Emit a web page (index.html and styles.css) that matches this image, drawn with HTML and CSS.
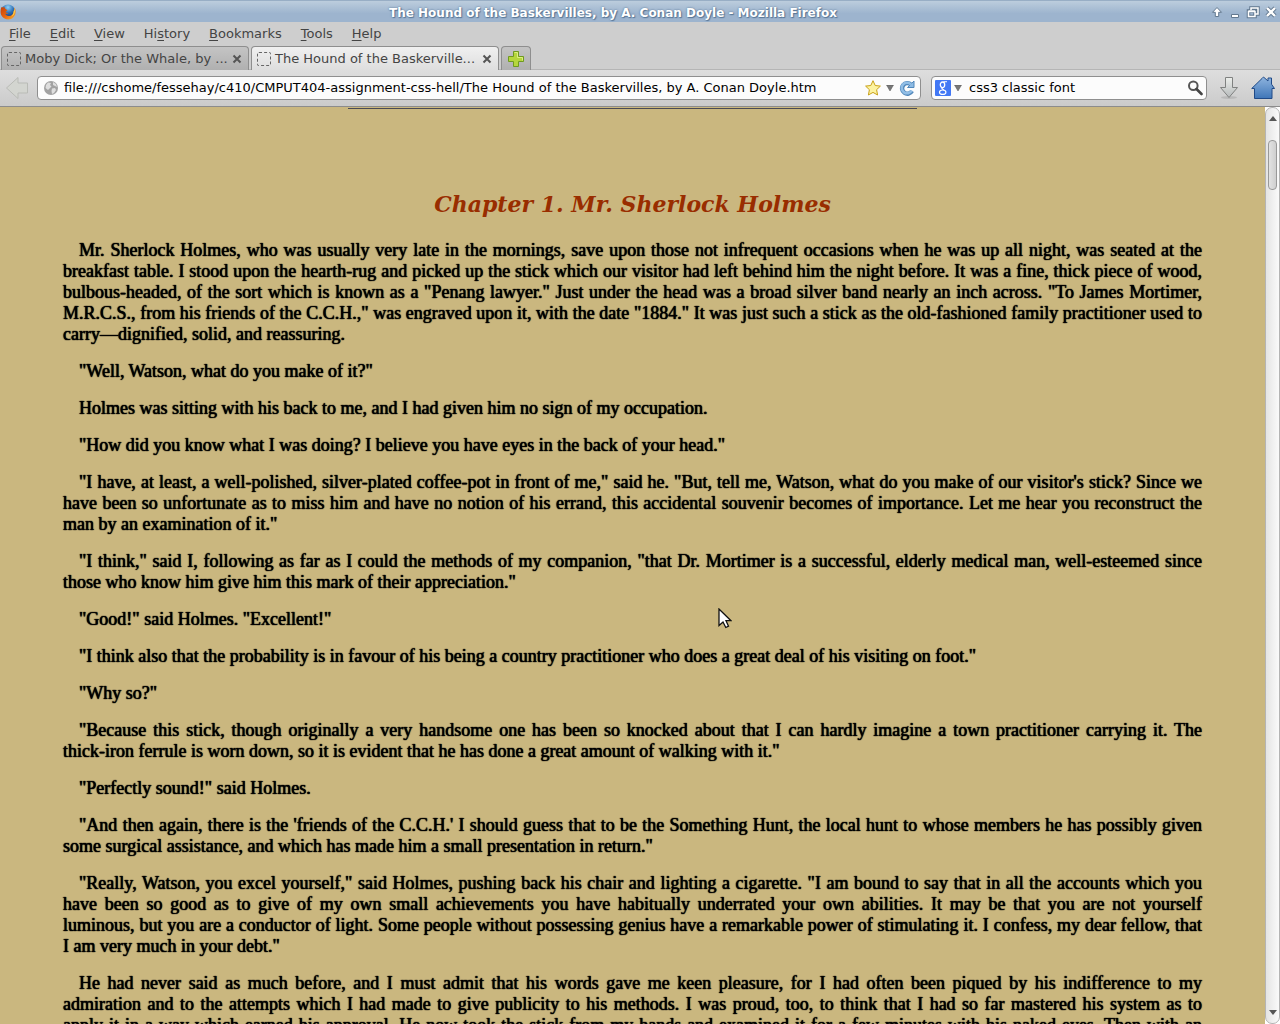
FILE: index.html
```html
<!DOCTYPE html>
<html lang="en">
<head>
<meta charset="utf-8">
<title>The Hound of the Baskervilles, by A. Conan Doyle</title>
<link rel="stylesheet" href="styles.css">
</head>
<body>
<header class="titlebar">
  <svg class="app-icon" viewBox="0 0 16 16" width="16" height="16" aria-hidden="true">
    <defs>
      <radialGradient id="globe" cx=".5" cy=".2" r=".8"><stop offset="0" stop-color="#8fd0f5"/><stop offset=".5" stop-color="#2f6fb4"/><stop offset="1" stop-color="#12306c"/></radialGradient>
      <linearGradient id="fox" x1="0" y1="0" x2="1" y2="1"><stop offset="0" stop-color="#c2410c"/><stop offset=".5" stop-color="#e8610c"/><stop offset="1" stop-color="#f7b733"/></linearGradient>
    </defs>
    <circle cx="8" cy="7.500" r="7" fill="url(#globe)"/>
    <path d="M1.500 3C.300 5.500.100 9.500 1.800 12c2.500 4 8.500 4.800 11.700 1.300C16 10.500 16.300 6.500 14.300 3.200c.300 2-.100 3.300-.700 4.300-.200 3-2.600 4.800-5 4.500-1.700-.200-3-1.200-3.400-2.500 1.200.500 2.300.300 3.100-.600-1.500.100-2.300-.500-2.500-1.500l1.700-1.200C5.800 5.500 4.800 4.500 4.600 3.300 3.500 3.400 2.500 3.700 1.500 3z" fill="url(#fox)"/>
    <path d="M14.300 3.200c.300 2-.100 3.300-.700 4.300 0 2.500-1 4-3 5 4.500-.700 5-5.500 3.700-9.300z" fill="#ffd84a"/>
  </svg>
  <h1 class="window-title">The Hound of the Baskervilles, by A. Conan Doyle - Mozilla Firefox</h1>
  <div class="window-buttons">
    <button aria-label="Shade"><svg viewBox="0 0 14 14" width="14" height="14"><path d="M7 2.500l4.500 4.800H8.700V11.500H5.300V7.300H2.500z" fill="#fff" stroke="#62788f"/></svg></button>
    <button aria-label="Minimize"><svg viewBox="0 0 14 14" width="14" height="14"><path d="M3.500 9.500h7v3h-7z" fill="#fff" stroke="#62788f"/></svg></button>
    <button aria-label="Restore"><svg viewBox="0 0 14 14" width="14" height="14"><path d="M5 5V3h7v6H9.500M2.500 6h6.500v5.500H2.500z" fill="none" stroke="#62788f" stroke-width="3.500"/><path d="M5 5V3h7v6H9.500M2.500 6.500h6.500v5H2.500zM2.500 6h6.500" fill="none" stroke="#fff" stroke-width="1.500"/></svg></button>
    <button aria-label="Close"><svg viewBox="0 0 14 14" width="14" height="14"><path d="M3 3l8 8M11 3l-8 8" stroke="#62788f" stroke-width="4.200"/><path d="M3 3l8 8M11 3l-8 8" stroke="#fff" stroke-width="2.400"/></svg></button>
  </div>
</header>
<nav class="menubar">
  <button><u>F</u>ile</button><button><u>E</u>dit</button><button><u>V</u>iew</button><button>Hi<u>s</u>tory</button><button><u>B</u>ookmarks</button><button><u>T</u>ools</button><button><u>H</u>elp</button>
</nav>
<div class="tabs">
  <div class="tab">
    <span class="page-icon"></span><a class="tab-label" href="#moby">Moby Dick; Or the Whale, by ...</a>
    <button class="tab-close" aria-label="Close tab"><svg viewBox="0 0 10 10" width="10" height="10"><path d="M1.500 1.500l7 7M8.500 1.500l-7 7" stroke="#555" stroke-width="2"/></svg></button>
  </div>
  <div class="tab tab-active">
    <span class="page-icon"></span><a class="tab-label" href="#hound">The Hound of the Baskerville...</a>
    <button class="tab-close" aria-label="Close tab"><svg viewBox="0 0 10 10" width="10" height="10"><path d="M1.500 1.500l7 7M8.500 1.500l-7 7" stroke="#555" stroke-width="2"/></svg></button>
  </div>
  <button class="tab new-tab" aria-label="New tab"><svg viewBox="0 0 16 16" width="16" height="16"><path d="M5.500.500h5v5h5v5h-5v5h-5v-5h-5v-5h5z" fill="#b5d63c" stroke="#6f9a1f"/><path d="M6.500 1.500h3v5h5v3" fill="none" stroke="#dcee82"/></svg></button>
</div>
<div class="toolbar">
  <button class="back" aria-label="Back"><svg viewBox="0 0 24 24" width="24" height="24"><path d="M1.500 12L13 1.500V7h9.500v10H13v5.500z" fill="#d3d5d0" stroke="#b9bbb6"/></svg></button>
  <div class="field location">
    <svg viewBox="0 0 16 16" width="16" height="16" aria-hidden="true"><circle cx="8" cy="8" r="7" fill="#a2a2a2"/><path d="M3 5l2-2.500 3 .500-1 2 1.500 1.500L6 9l-1 1-2.500-2zM10 2l3 2 1 3-2-1-2-1zM9 8.500l3-.500 1 2-2 3-2 1-.500-3z" fill="#dedede"/></svg>
    <input aria-label="Location" value="file:///cshome/fessehay/c410/CMPUT404-assignment-css-hell/The Hound of the Baskervilles, by A. Conan Doyle.htm">
    <button aria-label="Bookmark"><svg viewBox="0 0 16 16" width="16" height="16"><path d="M8 .700l2.200 4.800 5.200.600-3.800 3.600 1 5.300L8 12.400 3.400 15l1-5.300L.600 6.100l5.200-.600z" fill="#fdf3a0" stroke="#c9a21a" stroke-linejoin="round"/></svg></button>
    <button class="drop" aria-label="History"><svg viewBox="0 0 8 6" width="8" height="6"><path d="M.500 0h7L4 6z" fill="#777" stroke="#555" stroke-width=".500"/></svg></button>
    <button aria-label="Reload"><svg viewBox="0 0 16 16" width="16" height="16"><path d="M12 4.500A5.300 5.300 0 1 0 13 11" fill="none" stroke="#5288bb" stroke-width="4.400"/><path d="M8.500 7.500h6.500V1z" fill="#8dbbe4" stroke="#5288bb"/><path d="M12 4.500A5.300 5.300 0 1 0 12.700 10.500" fill="none" stroke="#91bee6" stroke-width="2.600"/></svg></button>
  </div>
  <div class="field search">
    <button aria-label="Search engine" class="engine"><svg viewBox="0 0 16 16" width="16" height="16"><rect width="16" height="16" rx="1" fill="#4278f5"/><ellipse cx="7.500" cy="4.800" rx="2.200" ry="2.800" fill="none" stroke="#fff" stroke-width="1.300"/><ellipse cx="7.700" cy="12.200" rx="3.200" ry="2.200" fill="none" stroke="#fff" stroke-width="1.200"/><path d="M8.500 1.800h3.500M7.500 7.500c-1.500 1 0 1.600 1.500 2.500" fill="none" stroke="#fff" stroke-width="1.100"/></svg>
    <svg viewBox="0 0 8 6" width="8" height="6"><path d="M.500 0h7L4 6z" fill="#777" stroke="#555" stroke-width=".500"/></svg></button>
    <input aria-label="Search" value="css3 classic font">
    <button aria-label="Search"><svg viewBox="0 0 16 16" width="16" height="16"><circle cx="6.300" cy="5.800" r="4.300" fill="none" stroke="#555" stroke-width="2"/><path d="M9.500 9l5 5" stroke="#444" stroke-width="2.600" stroke-linecap="round"/></svg></button>
  </div>
  <button class="tool" aria-label="Downloads"><svg viewBox="0 0 24 24" width="24" height="24"><defs><linearGradient id="dl" x2="0" y2="1"><stop offset="0" stop-color="#eceeeb"/><stop offset="1" stop-color="#b6babb"/></linearGradient></defs><ellipse cx="12" cy="21.500" rx="8" ry="1.500" fill="#aaa" opacity=".6"/><path d="M8.500 1.500h7v10h5L12 21.500 3.500 11.500h5z" fill="url(#dl)" stroke="#7f8180"/></svg></button>
  <button class="tool" aria-label="Home"><svg viewBox="0 0 24 24" width="24" height="24"><defs><linearGradient id="hm" x2="0" y2="1"><stop offset="0" stop-color="#8fb4de"/><stop offset="1" stop-color="#3f76b8"/></linearGradient></defs><path d="M.700 12.500L11 2.500l1.500-1.500L17 5V2h3.500v6.200l3 4.300h-2.500v10H3.500v-10z" fill="url(#hm)" stroke="#204a87" stroke-linejoin="round"/></svg></button>
</div>
<div class="viewport">
  <main class="page">
    <hr>
    <h2>Chapter 1. Mr. Sherlock Holmes</h2>
    <p>Mr. Sherlock Holmes, who was usually very late in the mornings, save upon those not infrequent occasions when he was up all night, was seated at the breakfast table. I stood upon the hearth-rug and picked up the stick which our visitor had left behind him the night before. It was a fine, thick piece of wood, bulbous-headed, of the sort which is known as a "Penang lawyer." Just under the head was a broad silver band nearly an inch across. "To James Mortimer, M.R.C.S., from his friends of the C.C.H.," was engraved upon it, with the date "1884." It was just such a stick as the old-fashioned family practitioner used to carry—dignified, solid, and reassuring.</p>
    <p>"Well, Watson, what do you make of it?"</p>
    <p>Holmes was sitting with his back to me, and I had given him no sign of my occupation.</p>
    <p>"How did you know what I was doing? I believe you have eyes in the back of your head."</p>
    <p>"I have, at least, a well-polished, silver-plated coffee-pot in front of me," said he. "But, tell me, Watson, what do you make of our visitor's stick? Since we have been so unfortunate as to miss him and have no notion of his errand, this accidental souvenir becomes of importance. Let me hear you reconstruct the man by an examination of it."</p>
    <p>"I think," said I, following as far as I could the methods of my companion, "that Dr. Mortimer is a successful, elderly medical man, well-esteemed since those who know him give him this mark of their appreciation."</p>
    <p>"Good!" said Holmes. "Excellent!"</p>
    <p>"I think also that the probability is in favour of his being a country practitioner who does a great deal of his visiting on foot."</p>
    <p>"Why so?"</p>
    <p>"Because this stick, though originally a very handsome one has been so knocked about that I can hardly imagine a town practitioner carrying it. The <span class="unbroken">thick-iron</span> ferrule is worn down, so it is evident that he has done a great amount of walking with it."</p>
    <p>"Perfectly sound!" said Holmes.</p>
    <p>"And then again, there is the 'friends of the C.C.H.' I should guess that to be the Something Hunt, the local hunt to whose members he has possibly given some surgical assistance, and which has made him a small presentation in return."</p>
    <p>"Really, Watson, you excel yourself," said Holmes, pushing back his chair and lighting a cigarette. "I am bound to say that in all the accounts which you have been so good as to give of my own small achievements you have habitually underrated your own abilities. It may be that you are not yourself <span class="unbroken">luminous, but</span> you are a conductor of light. Some people without possessing genius have a remarkable power of stimulating it. I confess, my dear fellow, that <span class="unbroken">I am very</span> much in your debt."</p>
    <p class="continued">He had never said as much before, and I must admit that his words gave me keen pleasure, for I had often been piqued by his indifference to my <span class="unbroken">admiration and</span> to the attempts which I had made to give publicity to his methods. I was proud, too, to think that I had so far mastered his system as to <span class="unbroken">apply it in a way</span> which earned his approval. He now took the stick from my hands and examined it for a few minutes with his naked eyes. Then with an</p>
  </main>
  <div class="scrollbar">
    <div class="track">
      <svg viewBox="0 0 8 5" width="8" height="5"><path d="M4 0l4 5H0z" fill="#555"/></svg>
      <div class="thumb"></div>
      <svg class="down" viewBox="0 0 8 5" width="8" height="5"><path d="M0 0h8L4 5z" fill="#555"/></svg>
    </div>
  </div>
  <svg class="cursor" viewBox="0 0 14 22" width="14" height="22" aria-hidden="true"><path d="M1 1v16.500l4-3.500 2.800 5.500 2.700-1.300L8 12.700h5z" fill="#fff" stroke="#111" stroke-width="1.300"/></svg>
</div>
</body>
</html>
```
FILE: styles.css
```css
* { box-sizing: border-box; }
body {
  margin: 0;
  height: 100vh;
  display: flex;
  flex-direction: column;
  overflow: hidden;
  background: #cecece;
  color: #444;
  font: 13px/20px "DejaVu Sans", sans-serif;
}
button { margin: 0; padding: 0; border: 0; background: none; color: inherit; font: inherit; }
svg { display: block; flex: none; }

.titlebar {
  display: flex;
  align-items: center;
  height: 22px;
  flex: none;
  border-top: 1px solid #98aec5;
  background: linear-gradient(#bccddd, #9db4ce 60%, #9db4ce);
}
.window-title {
  flex: 1;
  margin: 0;
  padding-top: 2px;
  color: #fff;
  font-size: 12px;
  line-height: 20px;
  text-align: center;
  text-shadow: 0 0 2px #4a6a8c, 1px 1px 1px #5c7a9a;
}
.window-buttons { display: flex; gap: 4px; padding-right: 2px; }

.menubar { display: flex; gap: 19px; flex: none; height: 24px; padding: 1px 9px; }
.menubar button { line-height: 20px; }
.menubar u { text-underline-offset: 2px; }

.tabs { display: flex; gap: 2px; flex: none; height: 24px; padding-left: 1px; border-bottom: 1px solid #b5b5b5; }
.tab {
  display: flex;
  align-items: center;
  gap: 4px;
  width: 248px;
  height: 24px;
  padding: 0 6px 0 5px;
  border: 1px solid #8e8e8e;
  border-bottom: 0;
  border-radius: 4px 4px 0 0;
  background: linear-gradient(#c4c4c4, #b0b0b0);
}
.tab-active { background: linear-gradient(#f0f0f0, #dedede); }
.tab-label { flex: 1; color: inherit; text-decoration: none; white-space: nowrap; }
.page-icon { width: 14px; height: 14px; border: 1px dashed #666; border-radius: 2px; }
.new-tab { width: 30px; padding: 0 6px; }

.toolbar {
  display: flex;
  align-items: center;
  gap: 10px;
  flex: none;
  height: 37px;
  padding: 0 5px;
  border-bottom: 1px solid #8c8c8c;
  background: linear-gradient(#dedede, #cbcbcb);
}
.back { margin-right: -2px; }
.field {
  display: flex;
  align-items: center;
  gap: 5px;
  height: 24px;
  padding: 0 5px;
  border: 1px solid #8f8f8f;
  border-radius: 4px;
  background: #fcfcfc;
}
.field input {
  flex: 1;
  min-width: 0;
  padding: 0;
  border: 0;
  background: none;
  color: #000;
  font: inherit;
  outline: 0;
}
.location { flex: 1; }
.search { width: 276px; gap: 7px; padding: 0 3px; }
.engine { display: flex; align-items: center; gap: 3px; }

.viewport { position: relative; display: flex; flex: 1; min-height: 0; background: #cab77f; }
.page {
  flex: 1;
  overflow: hidden;
  padding: 1px 63px 0;
  color: #000;
  font: 18px/21px "Liberation Serif", serif;
  text-shadow: 0 0 1px, 0 0 1px;
}
.page hr { width: 50%; height: 1px; margin: 0 auto 80px; border: 0; background: #4a4a55; }
.page h2 {
  margin: 0 0 21px;
  color: #992d00;
  font: italic bold 22px/30px "DejaVu Serif", serif;
  text-align: center;
  text-shadow: none;
}
.page p { margin: 0 0 16px; text-align: justify; text-indent: 16px; }
.page .continued { text-align-last: justify; }
.unbroken { white-space: nowrap; }

.scrollbar { width: 15px; background: #fff; }
.track {
  display: flex;
  flex-direction: column;
  align-items: center;
  height: 100%;
  padding: 8px 0;
  border: 1px solid #b4b4b4;
  border-radius: 7px;
  background: linear-gradient(90deg, #e4e4e4, #fafafa);
}
.thumb {
  width: 9px;
  height: 50px;
  margin-top: 19px;
  border: 1px solid #999;
  border-radius: 4px;
  background: linear-gradient(90deg, #e2e2e2, #cfcfcf);
}
.down { margin-top: auto; }
.cursor { position: absolute; left: 718px; top: 501px; }
```
